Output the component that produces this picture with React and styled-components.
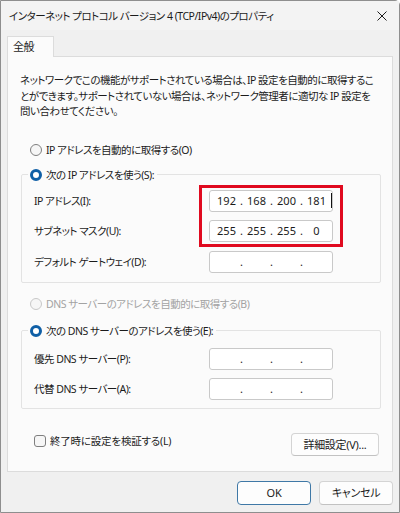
import styled, { createGlobalStyle } from "styled-components"

const GlobalStyle = createGlobalStyle`
  html, body {
    margin: 0;
    padding: 0;
    background: #ffffff;
  }
  body {
    font-family: "Noto Sans", "Noto Sans CJK JP", sans-serif;
    font-size: 10.5px;
    letter-spacing: -0.5px;
    color: #1b1b1b;
  }
  * {
    box-sizing: border-box;
  }
`

const Window = styled.div`
  width: 400px;
  height: 513px;
  border: 1px solid #8e8e8e;
  border-radius: 0 5px 0 0;
  background: #f0f0f0;
  display: flex;
  flex-direction: column;
  font-feature-settings: "palt";
`
const TitleBar = styled.div`
  height: 29px;
  display: flex;
  align-items: center;
  justify-content: space-between;
  padding: 0 12px 0 8px;
  background: #f3f3f3;
  line-height: 16px;
  font-size: 10.5px;
`
const Title = styled.span`
  white-space: nowrap;
`
const CloseIcon = styled.svg`
  width: 10px;
  height: 10px;
  display: block;
`
const Body = styled.div`
  flex: 1;
  display: flex;
  flex-direction: column;
  padding: 6px 6px 0;
`
const TabStrip = styled.div`
  display: flex;
  position: relative;
  z-index: 1;
  margin-bottom: -1px;
`
const Tab = styled.div`
  width: 47px;
  height: 21px;
  padding: 2px 0 0 5px;
  line-height: 16px;
  font-size: 11px;
  background: #fbfbfb;
  border: 1px solid #dcdcdc;
  border-bottom: none;
`
const Panel = styled.div`
  background: #fbfbfb;
  border: 1px solid #dcdcdc;
  padding: 16px 0 15px;
  display: flex;
  flex-direction: column;
`
const Intro = styled.p`
  margin: 0;
  padding: 0 10px 0 12px;
  line-height: 15.5px;
  white-space: nowrap;
`
const Choice = styled.label`
  display: flex;
  align-items: center;
  gap: 4px;
  height: 16px;
  line-height: 16px;
  margin: ${(p) => p.$top || 0}px 0 0 22px;
  color: ${(p) => (p.$disabled ? "#a3a3a3" : "inherit")};
  white-space: nowrap;
`
const Radio = styled.span`
  width: 12px;
  height: 12px;
  border-radius: 50%;
  flex: none;
  background: ${(p) => (p.$checked ? "#ffffff" : "#f6f6f6")};
  border: ${(p) =>
    p.$checked
      ? "3.5px solid #0f5fa6"
      : p.$disabled
      ? "1px solid #c8c8c8"
      : "1px solid #7f7f7f"};
`
const Group = styled.fieldset`
  margin: ${(p) => p.$top}px 11px 0 13px;
  padding: ${(p) => p.$padTop}px 12px ${(p) => p.$padBottom}px;
  border: 1px solid #e3e3e3;
  border-radius: 2px;
  min-width: 0;
`
const Legend = styled.legend`
  margin-left: -6px;
  padding: 0 3px 0 2px;
  height: 16px;
  line-height: 16px;
`
const LegendChoice = styled(Choice)`
  margin: 0;
`
const Rows = styled.div`
  position: relative;
  display: flex;
  flex-direction: column;
  gap: 8.5px;
`
const Row = styled.div`
  display: grid;
  grid-template-columns: 175px 124px;
  align-items: center;
`
const FieldLabel = styled.span`
  white-space: nowrap;
  line-height: 16px;
`
const IpBox = styled.div`
  height: 22px;
  background: #ffffff;
  border: 1px solid #c9c9c9;
  border-radius: 3px;
  display: flex;
  align-items: center;
  padding-left: 3px;
  line-height: 16px;
  font-family: "Noto Sans", sans-serif;
  font-size: 11px;
  letter-spacing: 0;
`
const Octet = styled.span`
  width: 27px;
  text-align: center;
  position: relative;
`
const Dot = styled.span`
  width: 3px;
  text-align: center;
`
const Caret = styled.span`
  position: absolute;
  right: -2px;
  top: 0;
  width: 1px;
  height: 15px;
  background: #111111;
`
const Highlight = styled.div`
  position: absolute;
  left: 165px;
  top: -5px;
  width: 144px;
  height: 62px;
  border: 3px solid #e00a1f;
  pointer-events: none;
`
const BottomRow = styled.div`
  display: flex;
  justify-content: space-between;
  align-items: flex-start;
  margin-top: 24px;
  padding: 0 13px 0 26px;
`
const Check = styled.span`
  width: 12px;
  height: 12px;
  flex: none;
  border: 1px solid #7f7f7f;
  border-radius: 3px;
  background: #f6f6f6;
`
const CheckChoice = styled(Choice)`
  margin: 0;
  gap: 4px;
  letter-spacing: -0.2px;
`
const Button = styled.button`
  height: ${(p) => p.$h || 24}px;
  width: ${(p) => p.$w}px;
  padding: 0;
  font: inherit;
  font-size: 11px;
  letter-spacing: -0.3px;
  color: #1b1b1b;
  line-height: 16px;
  background: #fdfdfd;
  border: 1px solid ${(p) => (p.$primary ? "#3f78a6" : "#d4d4d4")};
  border-bottom-color: ${(p) => (p.$primary ? "#3f78a6" : "#c2c2c2")};
  border-radius: 4px;
  font-feature-settings: "palt";
`
const Footer = styled.div`
  display: flex;
  justify-content: flex-end;
  gap: 8px;
  padding-top: 9px;
`

function IpField({ octets, caret }) {
  const parts = octets || ["", "", "", ""]
  return (
    <IpBox>
      <Octet>{parts[0]}</Octet>
      <Dot>.</Dot>
      <Octet>{parts[1]}</Octet>
      <Dot>.</Dot>
      <Octet>{parts[2]}</Octet>
      <Dot>.</Dot>
      <Octet>
        {parts[3]}
        {caret && <Caret />}
      </Octet>
    </IpBox>
  )
}

export default function App() {
  return (
    <Window>
      <GlobalStyle />
      <TitleBar>
        <Title>インターネット プロトコル バージョン 4 (TCP/IPv4)のプロパティ</Title>
        <CloseIcon viewBox="0 0 10 10">
          <path d="M0.5 0.5 L9.5 9.5 M9.5 0.5 L0.5 9.5" stroke="#1b1b1b" strokeWidth="1" fill="none" />
        </CloseIcon>
      </TitleBar>
      <Body>
        <TabStrip>
          <Tab>全般</Tab>
        </TabStrip>
        <Panel>
          <Intro>
            ネットワークでこの機能がサポートされている場合は、IP 設定を自動的に取得するこ
            <br />
            とができます。サポートされていない場合は、ネットワーク管理者に適切な IP 設定を
            <br />
            問い合わせてください。
          </Intro>
          <Choice $top={22}>
            <Radio />
            IP アドレスを自動的に取得する(O)
          </Choice>
          <Group $top={9} $padTop={7} $padBottom={9}>
            <Legend>
              <LegendChoice>
                <Radio $checked />
                次の IP アドレスを使う(S):
              </LegendChoice>
            </Legend>
            <Rows>
              <Row>
                <FieldLabel>IP アドレス(I):</FieldLabel>
                <IpField octets={["192", "168", "200", "181"]} caret />
              </Row>
              <Row>
                <FieldLabel>サブネット マスク(U):</FieldLabel>
                <IpField octets={["255", "255", "255", "0"]} />
              </Row>
              <Row>
                <FieldLabel>デフォルト ゲートウェイ(D):</FieldLabel>
                <IpField />
              </Row>
              <Highlight />
            </Rows>
          </Group>
          <Choice $top={13} $disabled>
            <Radio $disabled />
            DNS サーバーのアドレスを自動的に取得する(B)
          </Choice>
          <Group $top={11} $padTop={9} $padBottom={8}>
            <Legend>
              <LegendChoice>
                <Radio $checked />
                次の DNS サーバーのアドレスを使う(E):
              </LegendChoice>
            </Legend>
            <Rows>
              <Row>
                <FieldLabel>優先 DNS サーバー(P):</FieldLabel>
                <IpField />
              </Row>
              <Row>
                <FieldLabel>代替 DNS サーバー(A):</FieldLabel>
                <IpField />
              </Row>
            </Rows>
          </Group>
          <BottomRow>
            <CheckChoice>
              <Check />
              終了時に設定を検証する(L)
            </CheckChoice>
            <Button $w={88} $h={23}>詳細設定(V)...</Button>
          </BottomRow>
        </Panel>
        <Footer>
          <Button $w={74} $primary>OK</Button>
          <Button $w={74}>キャンセル</Button>
        </Footer>
      </Body>
    </Window>
  )
}
